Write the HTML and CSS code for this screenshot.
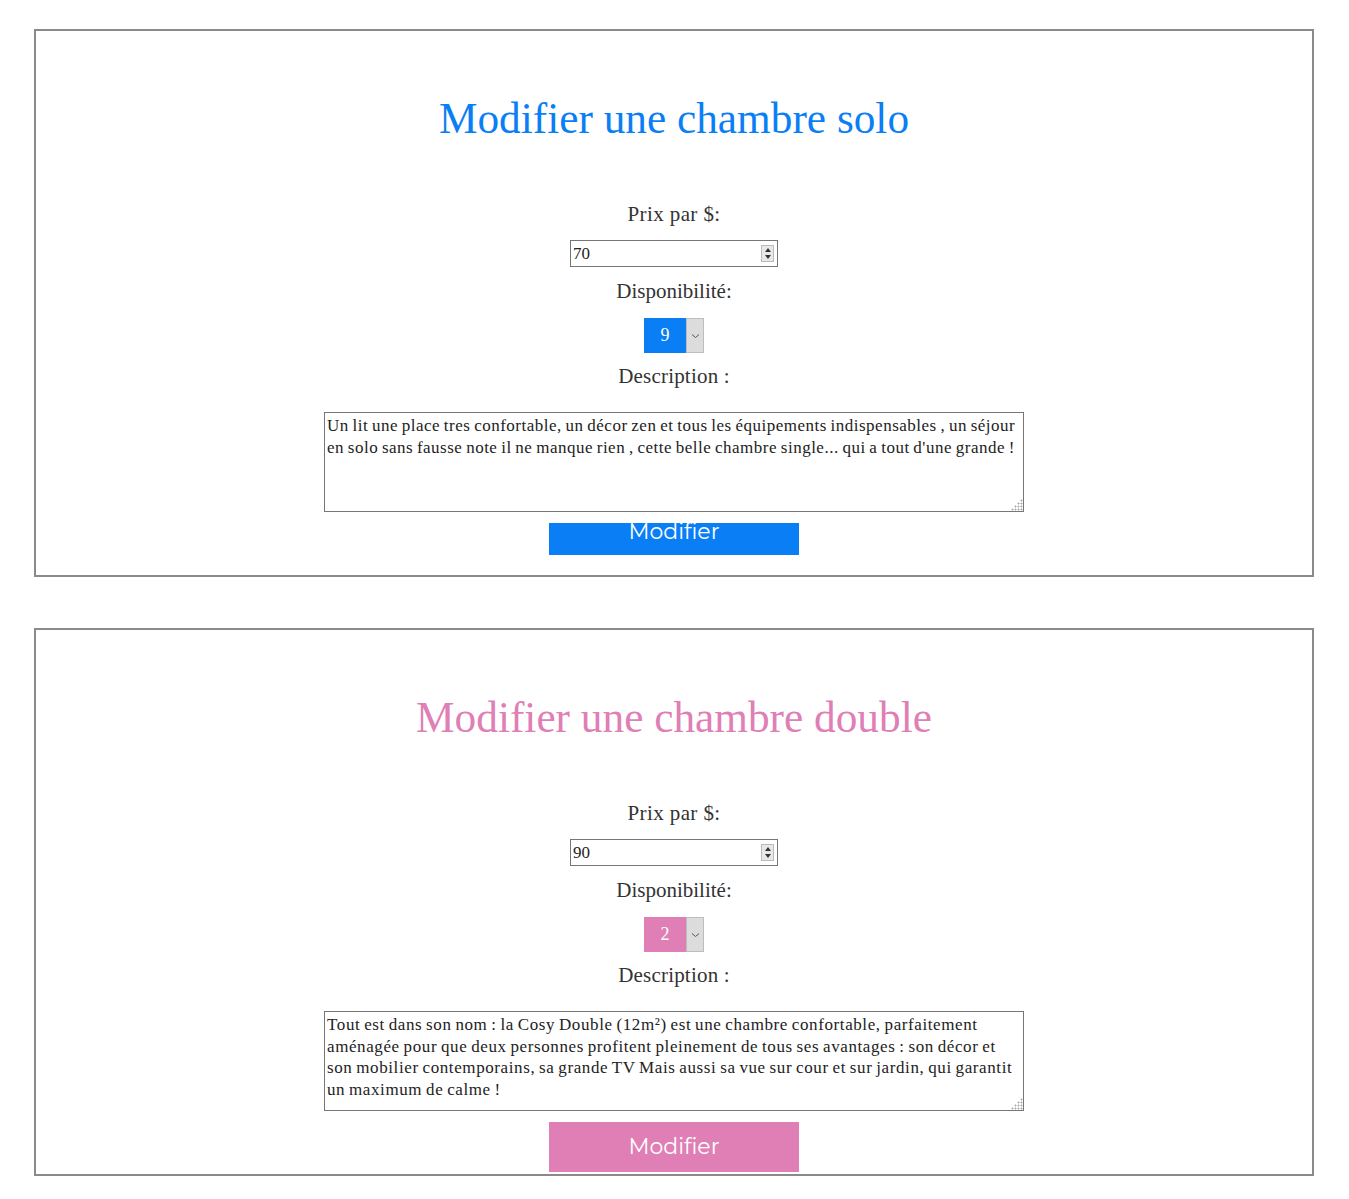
FILE: index.html
```html
<!DOCTYPE html>
<html lang="fr">
<head>
<meta charset="utf-8">
<title>Modifier les chambres</title>
<link rel="stylesheet" href="styles.css">
</head>
<body>
<form class="card card-solo">
  <h1 class="title">Modifier une chambre solo</h1>
  <label class="label label-first">Prix par $:</label>
  <div class="num">
    <input class="num-input" type="text" value="70">
    <span class="spin"><span class="up"></span><span class="down"></span></span>
  </div>
  <label class="label">Disponibilité:</label>
  <div class="sel">
    <span class="sel-value">9</span>
    <span class="sel-arrow"><svg width="9" height="6" viewBox="0 0 9 6"><path d="M1 1.5 L4.5 4.5 L8 1.5" fill="none" stroke="#555" stroke-width="1"/></svg></span>
  </div>
  <label class="label label-desc">Description :</label>
  <textarea class="desc">Un lit une place tres confortable, un décor zen et tous les équipements indispensables , un séjour en solo sans fausse note il ne manque rien , cette belle chambre single... qui a tout d'une grande !</textarea>
  <button class="btn btn-solo" type="button"><span>Modifier</span></button>
</form>

<form class="card card-double">
  <h1 class="title">Modifier une chambre double</h1>
  <label class="label label-first">Prix par $:</label>
  <div class="num">
    <input class="num-input" type="text" value="90">
    <span class="spin"><span class="up"></span><span class="down"></span></span>
  </div>
  <label class="label">Disponibilité:</label>
  <div class="sel">
    <span class="sel-value">2</span>
    <span class="sel-arrow"><svg width="9" height="6" viewBox="0 0 9 6"><path d="M1 1.5 L4.5 4.5 L8 1.5" fill="none" stroke="#555" stroke-width="1"/></svg></span>
  </div>
  <label class="label label-desc">Description :</label>
  <textarea class="desc">Tout est dans son nom : la Cosy Double (12m²) est une chambre confortable, parfaitement aménagée pour que deux personnes profitent pleinement de tous ses avantages : son décor et son mobilier contemporains, sa grande TV Mais aussi sa vue sur cour et sur jardin, qui garantit un maximum de calme !</textarea>
  <button class="btn btn-double" type="button"><span>Modifier</span></button>
</form>
</body>
</html>
```
FILE: styles.css
```css
html, body {
  margin: 0;
  padding: 0;
  background: #fff;
}
body {
  padding-top: 29px;
  font-family: "Liberation Serif", "Times New Roman", serif;
  color: #333;
}
.card {
  width: 1280px;
  height: 548px;
  box-sizing: border-box;
  margin: 0 0 51px 34px;
  border: 2px solid #8a8a8a;
  display: flex;
  flex-direction: column;
  align-items: center;
  padding-top: 63px;
}
.title {
  margin: 0;
  font-weight: normal;
  font-size: 43.3px;
  line-height: 48px;
}
.card-solo .title { color: #0a7ff5; }
.card-double .title { color: #df7fb6; }
.label {
  display: block;
  font-size: 21px;
  line-height: 24px;
  color: #333;
  margin-top: 12px;
}
.label-first { margin-top: 60px; letter-spacing: 0.4px; }
.label-desc { margin-top: 11px; letter-spacing: 0.2px; }
.num {
  position: relative;
  margin-top: 14px;
  width: 208px;
  height: 27px;
}
.num-input {
  box-sizing: border-box;
  width: 208px;
  height: 27px;
  margin: 0;
  border: 1px solid #767676;
  padding: 0 2px;
  font-family: "Liberation Serif", serif;
  font-size: 17px;
  color: #222;
  outline: none;
}
.spin {
  position: absolute;
  right: 4px;
  top: 5px;
  width: 13px;
  height: 17px;
  background: #e8e8e8;
  border: 1px solid #bbb;
  box-sizing: border-box;
  display: flex;
  flex-direction: column;
  align-items: center;
  justify-content: space-around;
}
.up, .down {
  width: 0;
  height: 0;
  border-left: 3px solid transparent;
  border-right: 3px solid transparent;
}
.up { border-bottom: 4px solid #333; }
.down { border-top: 4px solid #333; }
.sel {
  margin-top: 15px;
  display: flex;
  width: 60px;
  height: 35px;
}
.sel-value {
  width: 42px;
  display: flex;
  align-items: center;
  justify-content: center;
  color: #fff;
  font-size: 18px;
}
.card-solo .sel-value { background: #0a7ff5; }
.card-double .sel-value { background: #df7fb6; }
.sel-arrow {
  flex: 1;
  background: #dcdcdc;
  border: 1px solid #bdbdbd;
  display: flex;
  align-items: center;
  justify-content: center;
}
.desc {
  margin-top: 24px;
  width: 700px;
  height: 100px;
  box-sizing: border-box;
  border: 1px solid #767676;
  padding: 2px;
  font-family: "Liberation Serif", serif;
  font-size: 17px;
  letter-spacing: 0.5px;
  word-spacing: -1px;
  line-height: 21.5px;
  color: #222;
  resize: both;
}
.card-double .desc { letter-spacing: 0.6px; }
.desc::-webkit-resizer {
  background-color: #fff;
  background-image:
    linear-gradient(135deg, #fff 55%, transparent 55%),
    radial-gradient(circle, #a8a8a8 0.9px, transparent 1.1px);
  background-size: 100% 100%, 3px 3px;
}
.btn {
  margin-top: 11px;
  width: 250px;
  border: none;
  color: #fff;
  font-family: "Montserrat", "Open Sans", "Liberation Sans", sans-serif;
  font-size: 22px;
  padding: 0;
  cursor: pointer;
}
.btn-solo {
  background: #0a7ff5;
  height: 32px;
  display: flex;
  align-items: flex-start;
  justify-content: center;
  line-height: 18px;
}
.btn-double {
  background: #df7fb6;
  height: 50px;
  line-height: 50px;
}
```
